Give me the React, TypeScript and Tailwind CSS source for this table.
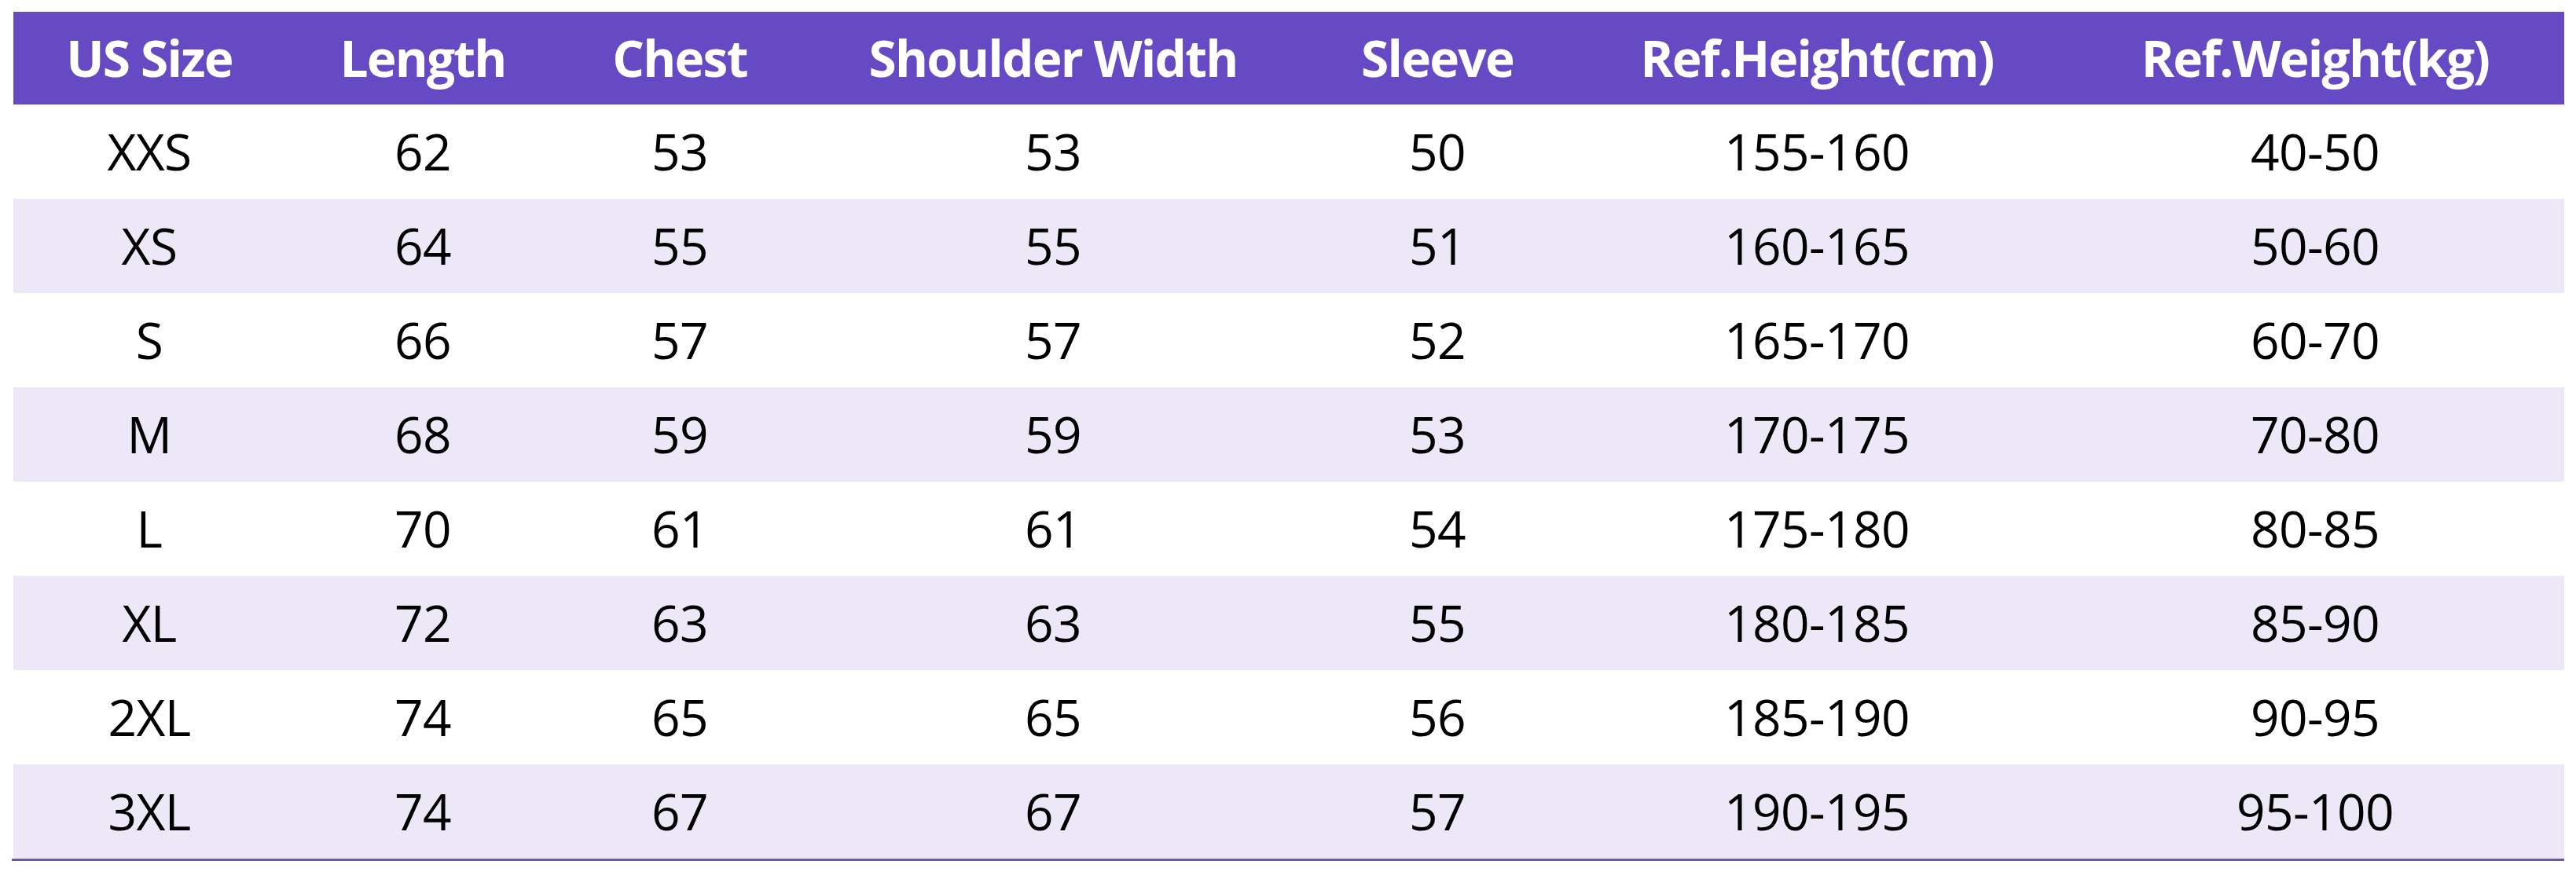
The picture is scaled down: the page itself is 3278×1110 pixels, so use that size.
import React from "react";

const headers = [
  "US Size",
  "Length",
  "Chest",
  "Shoulder Width",
  "Sleeve",
  "Ref.Height(cm)",
  "Ref.Weight(kg)",
];

const rows: string[][] = [
  ["XXS", "62", "53", "53", "50", "155-160", "40-50"],
  ["XS", "64", "55", "55", "51", "160-165", "50-60"],
  ["S", "66", "57", "57", "52", "165-170", "60-70"],
  ["M", "68", "59", "59", "53", "170-175", "70-80"],
  ["L", "70", "61", "61", "54", "175-180", "80-85"],
  ["XL", "72", "63", "63", "55", "180-185", "85-90"],
  ["2XL", "74", "65", "65", "56", "185-190", "90-95"],
  ["3XL", "74", "67", "67", "57", "190-195", "95-100"],
];

const cols =
  "grid grid-cols-[346px_350px_304px_646px_332px_634px_634px] w-[3246px]";

export default function App() {
  return (
    <div
      className="min-h-[1110px] w-[3278px] bg-white pt-[15px] pl-[17px]"
      style={{ fontFamily: '"Open Sans", "Noto Sans", sans-serif' }}
    >
      {/* header */}
      <div className={`${cols} h-[118px] bg-[#654ac4]`}>
        {headers.map((h) => (
          <div
            key={h}
            className="flex items-center justify-center text-[64px] font-bold text-white tracking-[-1.8px]"
          >
            {h}
          </div>
        ))}
      </div>

      {/* rows */}
      {rows.map((r, i) => (
        <div
          key={r[0]}
          className={`${cols} h-[120px] ${i % 2 === 1 ? "bg-[#ece8f8]" : "bg-white"}`}
        >
          {r.map((c, j) => (
            <div
              key={j}
              className="flex items-center justify-center text-[64px] text-black tracking-[-0.6px]"
            >
              {c}
            </div>
          ))}
        </div>
      ))}

      <div className="h-[3px] w-[3248px] -ml-[2px] bg-[#6a5a9c]" />
    </div>
  );
}
